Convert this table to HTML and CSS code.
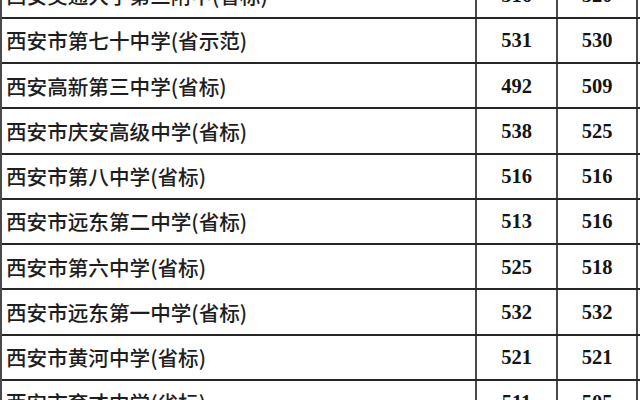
FILE: index.html
```html
<!DOCTYPE html>
<html lang="zh-CN">
<head>
<meta charset="utf-8">
<title>西安市高中录取分数线</title>
<link rel="stylesheet" href="styles.css">
</head>
<body>
<div class="sheet">
  <div class="rows">
    <div class="row"><div class="name">西安交通大学第三附中(省标)</div><div class="num">516</div><div class="num last">520</div></div>
    <div class="row"><div class="name">西安市第七十中学(省示范)</div><div class="num">531</div><div class="num last">530</div></div>
    <div class="row"><div class="name">西安高新第三中学(省标)</div><div class="num">492</div><div class="num last">509</div></div>
    <div class="row"><div class="name">西安市庆安高级中学(省标)</div><div class="num">538</div><div class="num last">525</div></div>
    <div class="row"><div class="name">西安市第八中学(省标)</div><div class="num">516</div><div class="num last">516</div></div>
    <div class="row"><div class="name">西安市远东第二中学(省标)</div><div class="num">513</div><div class="num last">516</div></div>
    <div class="row"><div class="name">西安市第六中学(省标)</div><div class="num">525</div><div class="num last">518</div></div>
    <div class="row"><div class="name">西安市远东第一中学(省标)</div><div class="num">532</div><div class="num last">532</div></div>
    <div class="row"><div class="name">西安市黄河中学(省标)</div><div class="num">521</div><div class="num last">521</div></div>
    <div class="row"><div class="name">西安市育才中学(省标)</div><div class="num">511</div><div class="num last">505</div></div>
  </div>
</div>
</body>
</html>
```

FILE: styles.css
```css
html, body {
  margin: 0;
  padding: 0;
  background: #ffffff;
}

.sheet {
  width: 640px;
  height: 400px;
  overflow: hidden;
  box-sizing: border-box;
  border-left: 2px solid #4a4a4a;
}

.rows {
  margin-top: -26.5px;
}

.row {
  display: grid;
  grid-template-columns: 473px 81px 82px;
  height: 45.25px;
  box-sizing: border-box;
  border-bottom: 2px solid #262626;
}

.name {
  display: flex;
  align-items: center;
  padding-left: 4px;
  font-family: "Noto Sans CJK SC", "Noto Sans", sans-serif;
  font-size: 20.6px;
  font-weight: 500;
  color: #1e1e1e;
  white-space: nowrap;
}

.num {
  display: flex;
  align-items: center;
  justify-content: center;
  border-left: 2px solid #4a4a4a;
  font-family: "Liberation Serif", "Times New Roman", serif;
  font-weight: bold;
  font-size: 20.5px;
  color: #141414;
  padding-top: 1px;
}

.num.last {
  border-right: 2px solid #4a4a4a;
}
```
